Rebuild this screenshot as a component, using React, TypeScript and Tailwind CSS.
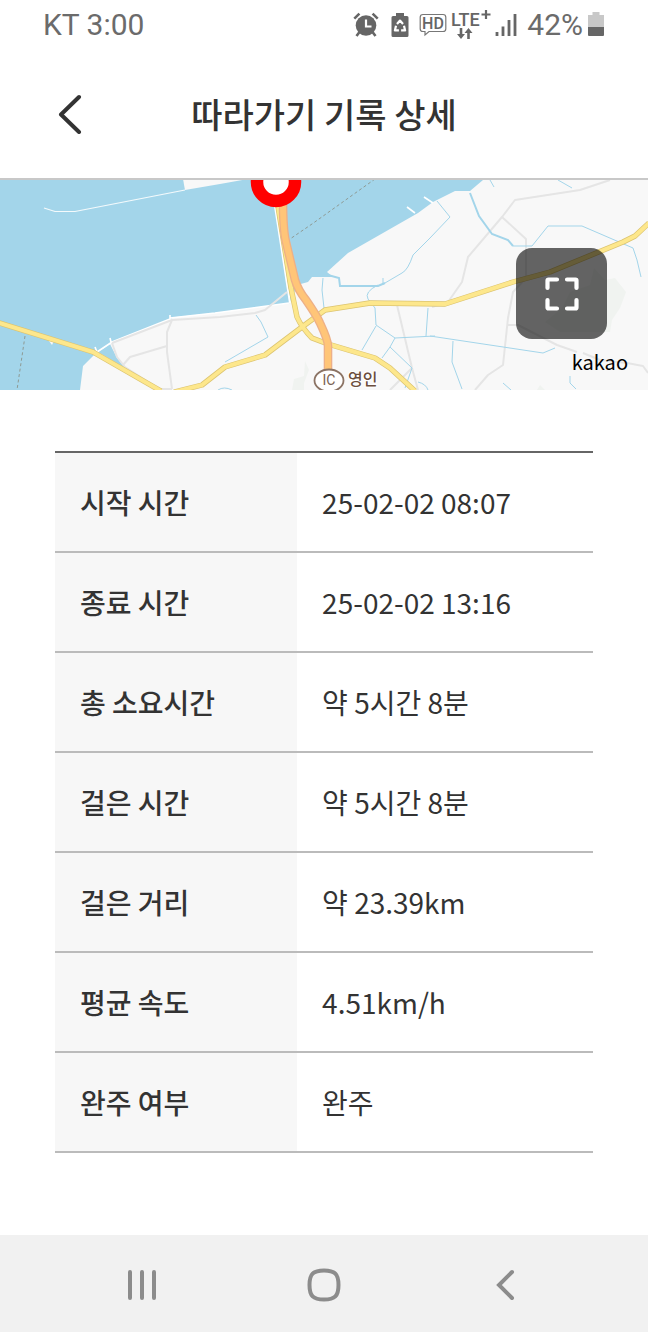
const records = [
  { label: '시작 시간', value: '25-02-02 08:07' },
  { label: '종료 시간', value: '25-02-02 13:16' },
  { label: '총 소요시간', value: '약 5시간 8분' },
  { label: '걸은 시간', value: '약 5시간 8분' },
  { label: '걸은 거리', value: '약 23.39km' },
  { label: '평균 속도', value: '4.51km/h' },
  { label: '완주 여부', value: '완주' },
];

function AlarmIcon() {
  return (
    <svg width="26" height="26" viewBox="0 0 26 26" aria-hidden="true">
      <g stroke="#666" strokeWidth="2.6" fill="none">
        <path d="M1.3 6.6 6.4 1.6M19.6 1.6l5.1 5" />
        <path d="m6.5 20-3 4M19.5 20l3 4" />
      </g>
      <circle cx="13" cy="13.5" r="10.3" fill="#666" />
      <path d="M13 7.5V14.5H18.5" stroke="#fff" strokeWidth="2.2" fill="none" />
    </svg>
  );
}

function BatterySaverIcon() {
  return (
    <svg width="18" height="26" viewBox="0 0 18 26" aria-hidden="true">
      <path d="M5 1h8v3h3a1.5 1.5 0 0 1 1.5 1.5v18A1.5 1.5 0 0 1 16 25H2a1.5 1.5 0 0 1-1.5-1.5v-18A1.5 1.5 0 0 1 2 4h3z" fill="#666" />
      <g stroke="#fff" strokeWidth="2.2" fill="none" strokeLinejoin="round">
        <path d="M6 12 9 8.6l3 3.4" />
        <path d="M5 13.8 3.9 18.4h4" />
        <path d="m13 13.8 1.1 4.6h-4" />
      </g>
    </svg>
  );
}

function HdIcon() {
  return (
    <svg width="28" height="26" viewBox="0 0 28 26" aria-hidden="true">
      <path d="M4 2.5h20a2.8 2.8 0 0 1 2.8 2.8v11.4a2.8 2.8 0 0 1-2.8 2.8H10L6 23v-3.5H4a2.8 2.8 0 0 1-2.8-2.8V5.3A2.8 2.8 0 0 1 4 2.5z" fill="none" stroke="#777" strokeWidth="1.2" />
      <text x="14" y="17" textAnchor="middle" fontFamily="Roboto, sans-serif" fontWeight="500" fontSize="16" fill="#666">HD</text>
    </svg>
  );
}

function LteIcon() {
  return (
    <svg width="42" height="32" viewBox="0 0 42 32" aria-hidden="true">
      <text x="0" y="17" fontFamily="Roboto, sans-serif" fontWeight="500" fontSize="18" fill="#666">LTE</text>
      <path d="M35 1v9M30.5 5.5h9" stroke="#666" strokeWidth="2.2" />
      <path d="M10 19v7M17.500 30v-6" stroke="#666" strokeWidth="2.6" />
      <path d="M6 25h8L10 30zM13.5 24h8L17.5 19z" fill="#666" />
    </svg>
  );
}

function SignalIcon() {
  return (
    <svg width="24" height="26" viewBox="0 0 24 26" aria-hidden="true">
      <path d="M2 20v4M8 14.5V24M14 8V24M20 2V24" stroke="#666" strokeWidth="2.8" />
    </svg>
  );
}

function BatteryIcon() {
  return (
    <svg width="18" height="26" viewBox="0 0 18 26" aria-hidden="true">
      <path d="M5.5 0h7v3H17v12H1V3h4.5z" fill="#c8c8c8" />
      <path d="M1 15h16v8a1 1 0 0 1-1 1H2a1 1 0 0 1-1-1z" fill="#666" />
    </svg>
  );
}

function StatusBar() {
  return (
    <div className="flex h-[50px] items-center justify-between px-[43px] font-[Roboto,sans-serif] text-[30px] leading-[50px] text-[#6b6b6b]">
      <span>KT 3:00</span>
      <div className="flex items-center">
        <AlarmIcon />
        <span className="ml-3"><BatterySaverIcon /></span>
        <span className="ml-2.5"><HdIcon /></span>
        <span className="ml-1"><LteIcon /></span>
        <span className="ml-0.5"><SignalIcon /></span>
        <span className="ml-2">42%</span>
        <span className="ml-1"><BatteryIcon /></span>
      </div>
    </div>
  );
}

const streams = [
  'M437 21 450 37 430 58 413 75Q408 90 402 93L385 103',
  'M508 60 513 66H532L548 46H582L633 68 637 80 641 97',
  'M378 105Q364 112 368 119L375 128 376 145 395 158 435 156',
  'M430 156 543 173 555 168',
  'M395 158 390 167 382 178M390 167 412 188 405 208',
  'M323 98 322 110 324 128',
  'M256 135 261 142 268 157 225 182',
  'M428 128 426 156M376 146 362 170',
  'M453 161 452 182 462 209M490 0 494 7M558 0 572 8M570 196V203L576 209M503 203 511 210M218 210Q224 206 232 210',
  'M418 202Q426 204 428 210M383 98V105',
];

const streetPaths = [
  'M112 163 172 140 220 137 255 133 265 130 287 112',
  'M172 140 167 152V172L172 209',
  'M167 166 130 177 123 185M112 163 117 177 125 187 159 209H172',
  'M397 125 412 188 418 210M412 188 390 210',
  'M610 0 580 10 515 20 502 37 468 77 462 102 448 122 432 127',
  'M502 37 526 59V98L513 112 508 138 503 185 488 195 475 210',
  'M508 145H518L557 165 577 172M583 173 600 180 627 183 643 186 648 193',
];

const yellowRoads = [
  'M-2 142.5 93 172 161 211',
  'M174 212 202 205 225 187 265 175 302 147 325 130 370 123 445 124 513 102 550 92 623 62 635 56 649 43',
  'M277 20 291 108 297 137Q302 148 312 158L328 164 375 178 390 188 415 211',
];

function MapDrawing() {
  return (
    <svg className="block h-full w-full" viewBox="0 0 648 210" preserveAspectRatio="xMidYMid slice" role="img" aria-label="경로 지도">
      <rect width="648" height="210" fill="#f8f8f8" />
      <path d="M0 0H483L470 11H455L433 22 418 33 348 73 327 92 333 97 312 97 308 102 297 105 290 123 215 133 176 137 170 139 112 162 97 172 83 186 80 210H0z" fill="#a3d5ea" />
      <path d="M98 172 110 164 117 178 125 188z" fill="#a3d5ea" />
      <path d="M183 -1 185 10 220 4 248 -1z" fill="#f8f8f8" />
      <path d="M44 28 55 31.5H75L185 10" fill="none" stroke="#f4fafc" strokeWidth="1.2" />
      <path d="M97 172 112 162 170 139V135M111 162 110 158M97 172 95 167M170 138 215 133 289 123M407 27 415 33M424 17 433 23" fill="none" stroke="#fff" strokeWidth="1.6" />
      <path d="M49 161H54L52 165z" fill="#f8f8f8" />
      <path d="M274 20 290 123" stroke="#fff" strokeWidth="2" />
      <path d="M305 181 309 190 304 203V210H292L294 199 304 196zM594 88 605 100 615 98 626 112 620 128 612 140 610 152 560 152 545 142 562 128 570 112 590 105zM540 205 545 210H537z" fill="#f0f3f0" />
      <g fill="none" stroke="#e5e5e5" strokeWidth="2" strokeLinejoin="round">
        {streetPaths.map((d) => <path key={d} d={d} />)}
      </g>
      <g fill="none" stroke="#a3d5ea" strokeWidth="1">
        {streams.map((d) => <path key={d} d={d} />)}
      </g>
      <path d="M328 95 339 98 340 106H378L385 103M470 13 479 36 492 54 508 60 513 66" fill="none" stroke="#a3d5ea" strokeWidth="2" />
      <path d="M375 -1 312 44 290 59M25 156 17 210" fill="none" stroke="#8e9a94" strokeWidth="1" strokeDasharray="3 2.5" />
      <g fill="none" strokeLinejoin="round">
        <g stroke="#dcc470" strokeWidth="5.4">{yellowRoads.map((d) => <path key={d} d={d} />)}</g>
        <g stroke="#fde78c" strokeWidth="4">{yellowRoads.map((d) => <path key={d} d={d} />)}</g>
        <path d="M283 20Q283 50 286 62L295 100Q298 110 306 120 317 136 320 143 328 160 328 166V195" stroke="#edb087" strokeWidth="8.6" />
        <path d="M283 20Q283 50 286 62L295 100Q298 110 306 120 317 136 320 143 328 160 328 166V195" stroke="#ffc578" strokeWidth="6" />
      </g>
      <circle cx="276" cy="2" r="19" fill="#fff" stroke="#f00" strokeWidth="12.5" />
      <ellipse cx="329" cy="200.5" rx="14.5" ry="11" fill="#fff" stroke="#8b7364" strokeWidth="1.8" />
      <text x="329" y="205" textAnchor="middle" fontFamily="Roboto, sans-serif" fontSize="14" fill="#7b6252">IC</text>
      <text x="348" y="205" fontFamily="'Noto Sans CJK KR', sans-serif" fontWeight="500" fontSize="16" fill="#6b4e3d" stroke="#fff" strokeWidth="2" paintOrder="stroke">영인</text>
    </svg>
  );
}

function MapPanel() {
  return (
    <section className="relative h-[210px] overflow-hidden">
      <MapDrawing />
      <button type="button" aria-label="지도 확대" className="absolute top-[68px] right-[41px] grid size-[91px] place-items-center rounded-2xl bg-black/60">
        <svg width="34" height="34" viewBox="0 0 34 34" fill="none" stroke="#fff" strokeWidth="4.2" strokeLinecap="round" strokeLinejoin="round" aria-hidden="true">
          <path d="M2.5 11V3.5Q2.5 2.5 3.5 2.5H12M22 2.5h8.5q1 0 1 1V11M31.5 23v7.5q0 1-1 1H22M12 31.5H3.5q-1 0-1-1V23" />
        </svg>
      </button>
      <span className="absolute right-5 bottom-3 text-xl leading-8 text-black">kakao</span>
    </section>
  );
}

export default function App() {
  return (
    <div className="flex min-h-screen flex-col bg-white font-['Noto_Sans_CJK_KR',sans-serif] text-[#333]">
      <StatusBar />
      <header className="grid h-[130px] grid-cols-[1fr_auto_1fr] items-center border-b-2 border-[#c8c8c8] px-[50px]">
        <button type="button" aria-label="뒤로" className="flex size-10 items-center justify-center justify-self-start">
          <svg width="24" height="40" viewBox="0 0 24 40" fill="none" stroke="#333" strokeWidth="4" strokeLinecap="round" strokeLinejoin="round" aria-hidden="true">
            <path d="M21 3 3 20.5 21 38" />
          </svg>
        </button>
        <h1 className="text-[34px] leading-[50px] font-medium">따라가기 기록 상세</h1>
      </header>
      <main>
        <MapPanel />
        <div className="px-[55px] pt-[61px] pb-20">
          <table className="w-full table-fixed border-separate border-spacing-0 border-t-2 border-[#666] text-left text-[28px] leading-10">
            <tbody>
              {records.map(({ label, value }) => (
                <tr key={label} className="h-[100px]">
                  <th scope="row" className="w-[45%] border-b-2 border-[#bbb] bg-[#f7f7f7] pl-[25px] font-medium">{label}</th>
                  <td className="border-b-2 border-[#bbb] pl-[25px]">{value}</td>
                </tr>
              ))}
            </tbody>
          </table>
        </div>
      </main>
      <nav className="mt-auto grid h-[97px] grid-cols-3 place-items-center bg-[#f1f1f1] px-[51px] pt-[2px]">
        <button type="button" aria-label="최근 앱" className="grid size-12 place-items-center">
          <svg width="30" height="32" viewBox="0 0 30 32" stroke="#8c8c8c" strokeWidth="4" strokeLinecap="round" aria-hidden="true">
            <path d="M3 3v26M15 3v26M27 3v26" />
          </svg>
        </button>
        <button type="button" aria-label="홈" className="grid size-12 place-items-center">
          <svg width="34" height="34" viewBox="0 0 34 34" fill="none" stroke="#8c8c8c" strokeWidth="4" aria-hidden="true">
            <path d="M17 2.5C28 2.5 31.5 6 31.5 17S28 31.5 17 31.5 2.5 28 2.5 17 6 2.5 17 2.5z" />
          </svg>
        </button>
        <button type="button" aria-label="이전" className="grid size-12 place-items-center">
          <svg width="22" height="32" viewBox="0 0 22 32" fill="none" stroke="#8c8c8c" strokeWidth="4" strokeLinecap="round" aria-hidden="true">
            <path d="M17 3 4 16 17 29" />
          </svg>
        </button>
      </nav>
    </div>
  );
}
